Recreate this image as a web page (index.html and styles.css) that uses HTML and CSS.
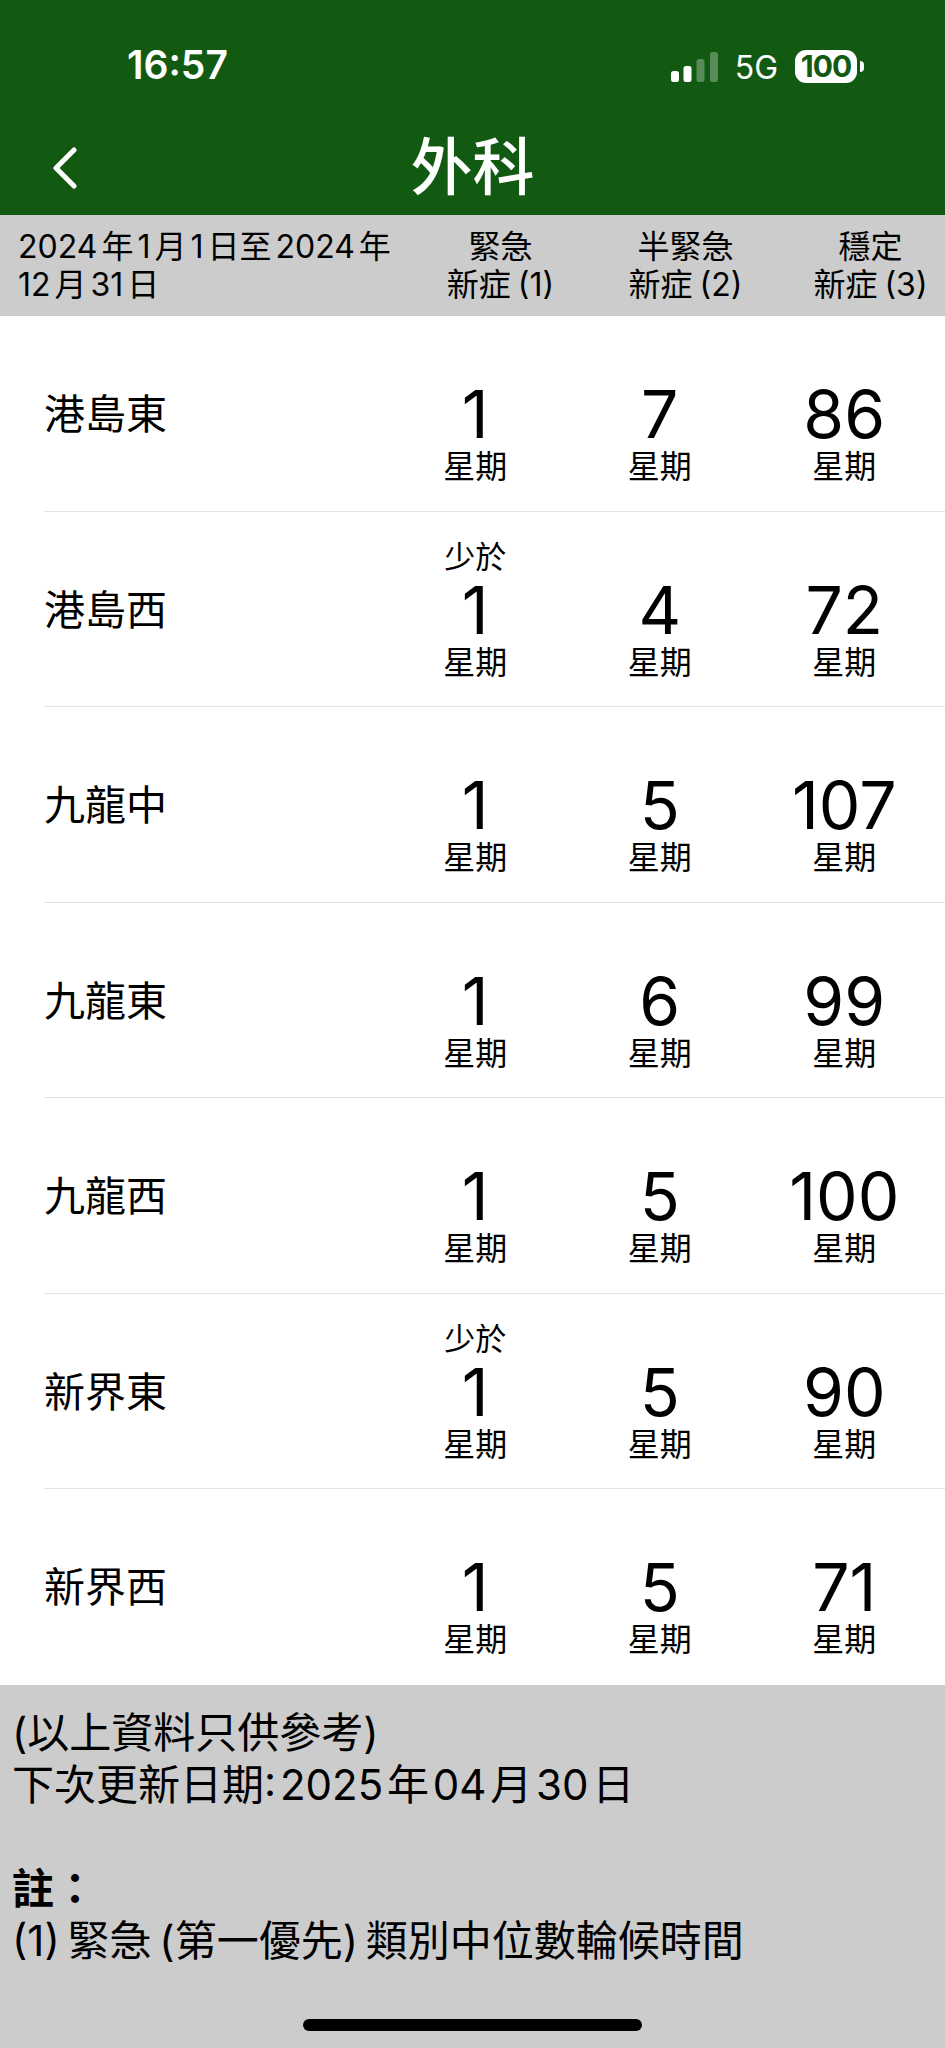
FILE: index.html
```html
<!DOCTYPE html>
<html>
<head>
    <meta charset="utf-8">
    <title>外科</title>
    <link rel="stylesheet" href="styles.css">
</head>
<body>

    <header class="topBar">
        <div class="statusBar">
            <span class="time">16:57</span>
            <div class="statusIcons">
                <svg class="signal" width="48" height="30" viewBox="0 0 48 30">
                    <rect x="1" y="19" width="8" height="11" rx="2.5" fill="#fff"/>
                    <rect x="13.5" y="14" width="8" height="16" rx="2.5" fill="#fff"/>
                    <rect x="26.5" y="7" width="8" height="23" rx="2.5" fill="#fff" opacity="0.3"/>
                    <rect x="40" y="0" width="8" height="30" rx="2.5" fill="#fff" opacity="0.3"/>
                </svg>
                <span class="network">5G</span>
                <span class="battery">100</span>
            </div>
        </div>
        <div class="navBar">
            <svg class="backIcon" width="26" height="42" viewBox="0 0 26 42">
                <path d="M23 3 L5 21 L23 39" fill="none" stroke="#fff" stroke-width="5" stroke-linecap="round" stroke-linejoin="round"/>
            </svg>
            <h1 class="pageTitle">外科</h1>
        </div>
    </header>

    <div class="tableHead">
        <div class="dateRange">2024 年 1 月 1 日至 2024 年<br>12 月 31 日</div>
        <div class="headCell">緊急<br>新症 (1)</div>
        <div class="headCell">半緊急<br>新症 (2)</div>
        <div class="headCell">穩定<br>新症 (3)</div>
    </div>

    <main class="clusterList">
        <div class="clusterRow">
            <div class="clusterName">港島東</div>
            <div class="waitCell"><span class="prefix"></span><span class="weeks">1</span><span class="unit">星期</span></div>
            <div class="waitCell"><span class="prefix"></span><span class="weeks">7</span><span class="unit">星期</span></div>
            <div class="waitCell"><span class="prefix"></span><span class="weeks">86</span><span class="unit">星期</span></div>
        </div>
        <div class="clusterRow">
            <div class="clusterName">港島西</div>
            <div class="waitCell"><span class="prefix">少於</span><span class="weeks">1</span><span class="unit">星期</span></div>
            <div class="waitCell"><span class="prefix"></span><span class="weeks">4</span><span class="unit">星期</span></div>
            <div class="waitCell"><span class="prefix"></span><span class="weeks">72</span><span class="unit">星期</span></div>
        </div>
        <div class="clusterRow">
            <div class="clusterName">九龍中</div>
            <div class="waitCell"><span class="prefix"></span><span class="weeks">1</span><span class="unit">星期</span></div>
            <div class="waitCell"><span class="prefix"></span><span class="weeks">5</span><span class="unit">星期</span></div>
            <div class="waitCell"><span class="prefix"></span><span class="weeks">107</span><span class="unit">星期</span></div>
        </div>
        <div class="clusterRow">
            <div class="clusterName">九龍東</div>
            <div class="waitCell"><span class="prefix"></span><span class="weeks">1</span><span class="unit">星期</span></div>
            <div class="waitCell"><span class="prefix"></span><span class="weeks">6</span><span class="unit">星期</span></div>
            <div class="waitCell"><span class="prefix"></span><span class="weeks">99</span><span class="unit">星期</span></div>
        </div>
        <div class="clusterRow">
            <div class="clusterName">九龍西</div>
            <div class="waitCell"><span class="prefix"></span><span class="weeks">1</span><span class="unit">星期</span></div>
            <div class="waitCell"><span class="prefix"></span><span class="weeks">5</span><span class="unit">星期</span></div>
            <div class="waitCell"><span class="prefix"></span><span class="weeks">100</span><span class="unit">星期</span></div>
        </div>
        <div class="clusterRow">
            <div class="clusterName">新界東</div>
            <div class="waitCell"><span class="prefix">少於</span><span class="weeks">1</span><span class="unit">星期</span></div>
            <div class="waitCell"><span class="prefix"></span><span class="weeks">5</span><span class="unit">星期</span></div>
            <div class="waitCell"><span class="prefix"></span><span class="weeks">90</span><span class="unit">星期</span></div>
        </div>
        <div class="clusterRow lastRow">
            <div class="clusterName">新界西</div>
            <div class="waitCell"><span class="prefix"></span><span class="weeks">1</span><span class="unit">星期</span></div>
            <div class="waitCell"><span class="prefix"></span><span class="weeks">5</span><span class="unit">星期</span></div>
            <div class="waitCell"><span class="prefix"></span><span class="weeks">71</span><span class="unit">星期</span></div>
        </div>
    </main>

    <footer class="notes">
        <p>(以上資料只供參考)</p>
        <p class="updateDate">下次更新日期: 2025 年 04 月 30 日</p>
        <p class="noteGap"><b>註：</b></p>
        <p>(1) 緊急 (第一優先) 類別中位數輪候時間</p>
        <div class="homeIndicator"></div>
    </footer>

</body>
</html>
```

FILE: styles.css
```css
html, body {
    margin: 0;
    padding: 0;
    overflow: hidden;
}

body {
    width: 945px;
    height: 2048px;
    display: flex;
    flex-direction: column;
    font-family: Inter, "Noto Sans CJK TC", sans-serif;
    color: #000;
    background-color: #fff;
}

.topBar {
    height: 215px;
    background-color: #125a12;
    color: #fff;
}

.statusBar {
    height: 128px;
    box-sizing: border-box;
    padding: 48px 88px 0 127px;
    display: flex;
    justify-content: space-between;
    align-items: flex-start;
}

.time {
    font-size: 39px;
    font-weight: 600;
    line-height: 34px;
}

.statusIcons {
    display: flex;
    align-items: center;
    gap: 17px;
}

.signal {
    margin-top: 1px;
}

.network {
    font-size: 32px;
    line-height: 34px;
    margin-top: 3px;
}

.battery {
    position: relative;
    width: 62px;
    height: 33px;
    border-radius: 11px;
    background-color: #fff;
    color: #125a12;
    font-size: 30px;
    font-weight: 700;
    line-height: 33px;
    text-align: center;
    letter-spacing: -1px;
}

.battery::after {
    content: "";
    position: absolute;
    left: 65px;
    top: 11px;
    width: 4px;
    height: 11px;
    border-radius: 0 4px 4px 0;
    background-color: #fff;
}

.navBar {
    height: 87px;
    display: flex;
    justify-content: center;
    align-items: center;
    position: relative;
}

.backIcon {
    position: absolute;
    left: 51px;
    top: 19px;
}

.pageTitle {
    margin: 0 0 8px 0;
    font-size: 62px;
    font-weight: 500;
    line-height: 70px;
}

.tableHead {
    height: 101px;
    box-sizing: border-box;
    padding: 13px 0 0 18px;
    display: grid;
    grid-template-columns: 390px 185px 185px 185px;
    background-color: #ccc;
    font-size: 32px;
    line-height: 38px;
    white-space: nowrap;
}

.dateRange {
    word-spacing: -5px;
}

.headCell {
    text-align: center;
    word-spacing: -2px;
}

.clusterRow {
    height: 195.5px;
    box-sizing: border-box;
    margin-left: 44px;
    display: grid;
    grid-template-columns: 339px 184.5px 184.5px 184.5px;
    border-bottom: 1px solid #e2e2e2;
}

.lastRow {
    border-bottom: none;
}

.clusterName {
    padding: 68px 0 0 0;
    font-size: 41px;
    line-height: 60px;
}

.waitCell {
    padding-top: 25px;
    display: flex;
    flex-direction: column;
    align-items: center;
}

.prefix {
    height: 40px;
    font-size: 31px;
    line-height: 40px;
}

.weeks {
    height: 68px;
    font-size: 66px;
    line-height: 66px;
}

.unit {
    height: 37px;
    font-size: 32px;
    line-height: 35px;
}

.notes {
    flex: 1;
    box-sizing: border-box;
    padding: 22px 0 17px 12px;
    display: flex;
    flex-direction: column;
    background-color: #ccc;
    font-size: 42px;
    line-height: 52px;
}

.notes p {
    margin: 0;
    word-spacing: -4px;
}

.notes .updateDate {
    word-spacing: -8px;
}

.notes .noteGap {
    margin-top: 52px;
}

.homeIndicator {
    width: 339px;
    height: 12px;
    margin: auto 0 0 291px;
    border-radius: 6px;
    background-color: #000;
}
```
